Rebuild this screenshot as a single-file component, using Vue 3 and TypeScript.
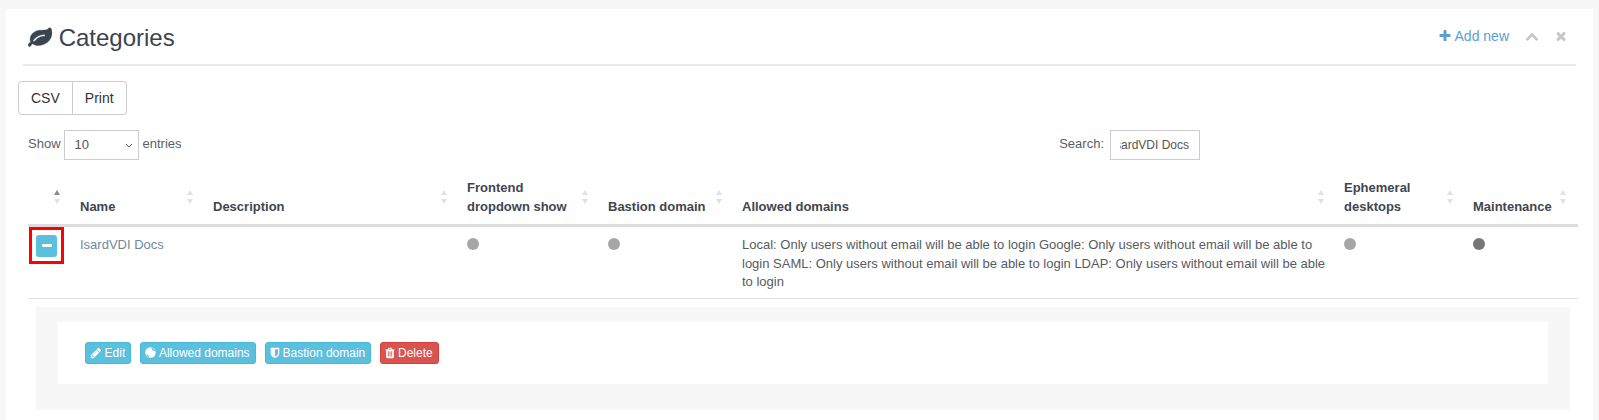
<script setup lang="ts">
const columns = [
  { key: 'c', label: '', w: 44 },
  { key: 'n', label: 'Name', w: 133 },
  { key: 'd', label: 'Description', w: 254 },
  { key: 'f', label: 'Frontend dropdown show', w: 141 },
  { key: 'b', label: 'Bastion domain', w: 134 },
  { key: 'a', label: 'Allowed domains', w: 602 },
  { key: 'e', label: 'Ephemeral desktops', w: 129 },
  { key: 'm', label: 'Maintenance', w: 113 },
]
const allowed = 'Local: Only users without email will be able to login Google: Only users without email will be able to login SAML: Only users without email will be able to login LDAP: Only users without email will be able to login'
</script>

<template>
  <div class="page">
    <section class="panel">
      <header class="title">
        <h2>
          <svg class="leaf" viewBox="0 0 1792 1792" width="24" height="24" aria-hidden="true">
            <path d="M1280 704q0-26-19-45t-45-19q-172 0-318 49.500t-259.500 134-235.500 219.500q-19 21-19 45 0 26 19 45t45 19q24 0 45-19 27-24 74-71t67-66q137-124 268.500-176t313.500-52q26 0 45-19t19-45zm512-198q0 95-20 193-46 224-184.500 383t-357.500 268q-214 108-438 108-148 0-286-47-15-5-88-42t-96-37q-16 0-39.500 32t-45 70-52.500 70-60 32q-30 0-51-11t-31-24-27-42q-2-4-6-11t-5.500-10-3-9.500-1.500-13.500q0-35 31-73.500t68-65.500 68-56 31-48q0-4-14-38t-16-44q-9-51-9-104 0-115 43.500-220t119-184.500 170.500-139 204-95.500q55-18 145-25.500t179.500-9 178.500-6 163.500-24 113.500-56.500l29.500-29.500 29.500-28 27-20 36.500-16 43.500-4.500q39 0 70.500 46t47.500 112 24 124 8 96z" fill="#3a4450" stroke="#3a4450" stroke-width="30" />
          </svg>
          <span>Categories</span>
        </h2>
        <div class="tools">
          <a class="add">
            <svg viewBox="0 0 1792 1792" width="14" height="14" aria-hidden="true"><path d="M1600 736v192q0 40-28 68t-68 28h-416v416q0 40-28 68t-68 28h-192q-40 0-68-28t-28-68v-416h-416q-40 0-68-28t-28-68v-192q0-40 28-68t68-28h416v-416q0-40 28-68t68-28h192q40 0 68 28t28 68v416h416q40 0 68 28t28 68z" fill="#5a9fd0" /></svg>
            Add new
          </a>
          <svg class="chev" viewBox="0 0 1792 1792" width="14" height="14" aria-hidden="true"><path d="M1683 1331l-166 165q-19 19-45 19t-45-19l-531-531-531 531q-19 19-45 19t-45-19l-166-165q-19-19-19-45.500t19-45.500l742-741q19-19 45-19t45 19l742 741q19 19 19 45.500t-19 45.500z" fill="#c5c7cb" /></svg>
          <svg class="cross" viewBox="0 0 1792 1792" width="14" height="14" aria-hidden="true"><path d="M1490 1322q0 40-28 68l-136 136q-28 28-68 28t-68-28l-294-294-294 294q-28 28-68 28t-68-28l-136-136q-28-28-28-68t28-68l294-294-294-294q-28-28-28-68t28-68l136-136q28-28 68-28t68 28l294 294 294-294q28-28 68-28t68 28l136 136q28 28 28 68t-28 68l-294 294 294 294q28 28 28 68z" fill="#c5c7cb" /></svg>
        </div>
      </header>

      <div class="export">
        <button class="ebtn">CSV</button><button class="ebtn last">Print</button>
      </div>

      <div class="controls">
        <label class="length">
          Show
          <span class="select">10
            <svg viewBox="0 0 10 6" width="8" height="5" aria-hidden="true"><path d="M1 1l4 4l4-4" fill="none" stroke="#555" stroke-width="1.2" /></svg>
          </span>
          entries
        </label>
        <label class="search">
          Search:
          <span class="input"><span class="clip"><span class="inner">IsardVDI Docs</span></span></span>
        </label>
      </div>

      <table class="table">
        <colgroup>
          <col v-for="c in columns" :key="c.key" :style="{ width: c.w + 'px' }" />
        </colgroup>
        <thead>
          <tr>
            <th v-for="(c, i) in columns" :key="c.key" :class="{ first: i === 0 }">
              {{ c.label }}
              <span class="sort"><i class="up" :class="{ active: i === 0 }"></i><i class="down"></i></span>
            </th>
          </tr>
        </thead>
        <tbody>
          <tr class="row">
            <td class="ctrl">
              <span class="outline"><span class="minus"><i></i></span></span>
            </td>
            <td class="name">IsardVDI Docs</td>
            <td></td>
            <td><span class="dot"></span></td>
            <td><span class="dot"></span></td>
            <td>{{ allowed }}</td>
            <td><span class="dot"></span></td>
            <td><span class="dot dark"></span></td>
          </tr>
        </tbody>
      </table>

      <div class="details">
        <div class="well">
          <button class="btn info">
            <svg class="i-pencil" viewBox="0 0 1792 1792" width="12" height="12" aria-hidden="true"><path d="M491 1536l91-91-235-235-91 91v107h128v128h107zm523-928q0-22-22-22-10 0-17 7l-542 542q-7 7-7 17 0 22 22 22 10 0 17-7l542-542q7-7 7-17zm-54-192l416 416-832 832h-416v-416zm683 96q0 53-37 90l-166 166-416-416 166-165q36-38 90-38 53 0 91 38l235 234q37 39 37 91z" fill="#fff" /></svg>
            Edit
          </button>
          <button class="btn info">
            <svg class="i-globe" viewBox="0 0 12 12" width="11" height="11" aria-hidden="true"><circle cx="6" cy="6" r="5.700" fill="#fff" /><path d="M7 0.700C9 1.200 10.700 2.800 11.300 4.700L9.800 4.200L8.700 3.800L7.500 2.500ZM1.300 8.500L3 8.300L4 9.500L4.300 11.200C3 10.800 2 9.800 1.300 8.500Z" fill="#5bc0de" /></svg>
            Allowed domains
          </button>
          <button class="btn info">
            <svg class="i-shield" viewBox="0 0 1792 1792" width="12" height="12" aria-hidden="true"><path d="M1344 960v-640h-448v1137q119-63 213-137 235-184 235-360zm192-768v768q0 86-33.500 170.500t-83 150-118 127.500-126.500 103-121 77.500-89.500 49.500-42.500 20q-12 6-26 6t-26-6q-16-7-42.500-20t-89.500-49.500-121-77.500-126.500-103-118-127.500-83-150-33.500-170.500v-768q0-26 19-45t45-19h1152q26 0 45 19t19 45z" fill="#fff" /></svg>
            Bastion domain
          </button>
          <button class="btn danger">
            <svg class="i-trash" viewBox="0 0 1792 1792" width="12" height="12" aria-hidden="true"><path d="M704 1376v-704q0-14-9-23t-23-9h-64q-14 0-23 9t-9 23v704q0 14 9 23t23 9h64q14 0 23-9t9-23zm256 0v-704q0-14-9-23t-23-9h-64q-14 0-23 9t-9 23v704q0 14 9 23t23 9h64q14 0 23-9t9-23zm256 0v-704q0-14-9-23t-23-9h-64q-14 0-23 9t-9 23v704q0 14 9 23t23 9h64q14 0 23-9t9-23zm-544-992h448l-48-117q-7-9-17-11h-317q-10 2-17 11zm928 32v64q0 14-9 23t-23 9h-96v948q0 83-47 143.500t-113 60.500h-832q-66 0-113-58.500t-47-141.500v-952h-96q-14 0-23-9t-9-23v-64q0-14 9-23t23-9h309l70-167q15-37 54-63t79-26h320q40 0 79 26t54 63l70 167h309q14 0 23 9t9 23z" fill="#fff" /></svg>
            Delete
          </button>
        </div>
      </div>
    </section>
  </div>
</template>

<style>
html, body { margin: 0; background: #f7f7f7; }
</style>

<style scoped>
.page {
  height: 420px;
  padding: 9px 6px 0;
  box-sizing: border-box;
  overflow: hidden;
  font-family: "Liberation Sans", Arial, sans-serif;
  font-size: 13px;
  line-height: 1.471;
  color: #73879c;
}
.panel {
  background: #fff;
  padding: 0 17px 0 12px;
  height: 411px;
}
.title {
  margin-left: 5px;
  height: 55px;
  border-bottom: 2px solid #e6e9ed;
  display: flex;
  justify-content: space-between;
}
h2 {
  margin: 0;
  padding-top: 14px;
  font-size: 24px;
  font-weight: 400;
  line-height: 30px;
  color: #3a4450;
  display: flex;
  align-items: center;
  height: 30px;
}
.leaf { margin: 0 6.670px 0 5px; }
.tools {
  display: flex;
  align-items: center;
  height: 24px;
  padding-top: 15px;
  margin-right: 8.500px;
}
.add {
  color: #5a9fd0;
  font-size: 14px;
  display: flex;
  align-items: center;
  gap: 2.500px;
}
.chev { margin-left: 16px; }
.cross { margin-left: 14.500px; }
.export { margin-top: 15px; height: 34px; display: flex; }
.ebtn {
  height: 34px;
  padding: 0 12px;
  background: #fff;
  border: 1px solid #ccc;
  border-radius: 4px 0 0 4px;
  font: 14px "Liberation Sans", Arial, sans-serif;
  color: #333;
}
.ebtn.last { border-left: 0; border-radius: 0 4px 4px 0; }
.controls {
  margin-top: 15px;
  height: 30px;
  display: flex;
  justify-content: space-between;
  padding: 0 0 0 10px;
  color: #5a5f66;
}
.length, .search { display: flex; align-items: flex-start; height: 30px; line-height: 28px; }
.select {
  width: 75px;
  height: 30px;
  box-sizing: border-box;
  border: 1px solid #ccc;
  margin: 0 4px 0 3px;
  padding: 0 5px 0 10px;
  display: flex;
  align-items: center;
  justify-content: space-between;
  color: #555;
  font-size: 13px;
}
.search { margin-right: 376px; }
.input {
  width: 90px;
  height: 30px;
  box-sizing: border-box;
  border: 1px solid #ccc;
  margin-left: 6px;
  padding: 0 10px 0 9px;
  display: flex;
  align-items: center;
  color: #555;
  font-size: 12px;
  white-space: nowrap;
}
.clip {
  flex: 1;
  min-width: 0;
  overflow: hidden;
  display: flex;
  justify-content: flex-end;
}
.inner { flex: none; }
.table {
  margin: 9px 0 0 10px;
  width: 1550px;
  table-layout: fixed;
  border-collapse: collapse;
}
th {
  position: relative;
  text-align: left;
  vertical-align: bottom;
  font-weight: 700;
  color: #3f4650;
  line-height: 19px;
  padding: 9px 18px 8px 8px;
  border-bottom: 3px solid #ddd;
  height: 38px;
}
.sort {
  position: absolute;
  right: 12px;
  top: 21px;
  display: flex;
  flex-direction: column;
  gap: 4px;
}
.sort i {
  width: 0;
  height: 0;
  border-left: 3.500px solid transparent;
  border-right: 3.500px solid transparent;
}
.sort .up { border-bottom: 5.500px solid #dfe1e4; }
.sort .down { border-top: 5.500px solid #dfe1e4; }
.sort .up.active { border-bottom-color: #858a94; }
.first .sort { left: 26px; right: auto; }
td {
  padding: 9px 8px 6px;
  vertical-align: top;
  line-height: 18.500px;
  color: #555b63;
  border-bottom: 1px solid #ddd;
}
.name { color: #73879c; }
.ctrl { padding: 0; position: relative; }
.outline {
  position: absolute;
  left: 1px;
  top: 0;
  width: 29px;
  height: 31px;
  border: 3px solid #f00;
  display: flex;
  align-items: center;
  justify-content: center;
}
.minus {
  width: 21px;
  height: 22px;
  background: #5bc0de;
  border-radius: 3px;
  display: flex;
  align-items: center;
  justify-content: center;
}
.minus i { width: 10px; height: 3px; background: #fff; border-radius: 1px; }
.dot {
  display: block;
  width: 12px;
  height: 12px;
  margin-top: 2px;
  border-radius: 50%;
  background: #a6a6a6;
}
.dot.dark { background: #777; }
.details {
  margin: 8px 0 0 18px;
  width: 1534px;
  height: 103px;
  background: #f7f7f7;
  padding: 15px 22px 0;
  box-sizing: border-box;
}
.well {
  height: 62px;
  background: #fff;
  padding: 20px 27px 0;
  box-sizing: border-box;
  display: flex;
  gap: 9px;
}
.btn {
  height: 22px;
  padding: 0 5px;
  border-radius: 3px;
  font: 12px "Liberation Sans", Arial, sans-serif;
  color: #fff;
  display: flex;
  align-items: center;
  gap: 3.300px;
  border: 1px solid #46b8da;
}
.i-pencil { margin: 0 -0.850px; }
.i-globe { margin: 0 -0.850px; }
.i-shield { margin: 0 -1.700px; }
.i-trash { margin: 0 -1.800px; }
.info { background: #5bc0de; }
.danger { background: #d9534f; border-color: #d43f3a; }
</style>
